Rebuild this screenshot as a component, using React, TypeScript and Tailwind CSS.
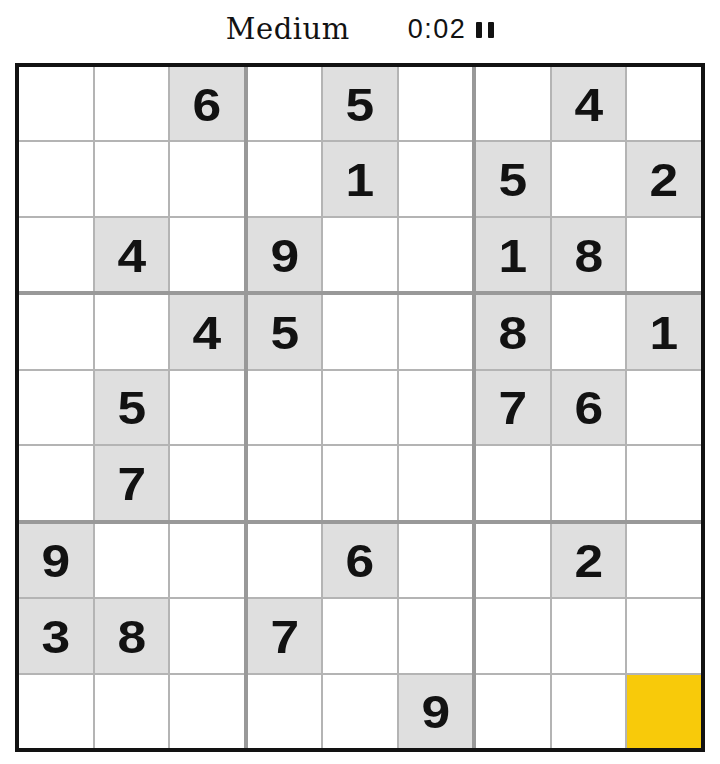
import React from "react";

const rows = [
  "__6_5__4_",
  "____1_5_2",
  "_4_9__18_",
  "__45__8_1",
  "_5____76_",
  "_7_______",
  "9___6__2_",
  "38_7_____",
  "_____9__Y",
];

function Cell({ v }: { v: string }) {
  if (v === "Y") return <div className="bg-[#f8ca0a]" />;
  if (v === "_") return <div className="bg-white" />;
  return (
    <div className="bg-[#dfdfdf] flex items-center justify-center">
      <span
        className="inline-block text-[46px] leading-none font-bold text-[#121212] scale-x-[1.12] translate-y-[1px]"
        style={{ fontFamily: '"Liberation Sans", Arial, sans-serif' }}
      >
        {v}
      </span>
    </div>
  );
}

export default function App() {
  const boxes = [];
  for (let br = 0; br < 3; br++) {
    for (let bc = 0; bc < 3; bc++) {
      const cells = [];
      for (let r = 0; r < 3; r++) {
        for (let c = 0; c < 3; c++) {
          cells.push(<Cell key={`${r}-${c}`} v={rows[br * 3 + r][bc * 3 + c]} />);
        }
      }
      boxes.push(
        <div key={`${br}-${bc}`} className="grid grid-cols-3 grid-rows-3 gap-[2px] bg-[#b4b4b4]">
          {cells}
        </div>
      );
    }
  }
  return (
    <div className="w-[720px] h-[764px] bg-white flex flex-col items-center">
      <div className="h-[63px] w-full flex items-center justify-center pb-[4px]">
        <span
          className="text-[29px] text-[#121212] tracking-[0.5px] mr-[58px]"
          style={{ fontFamily: '"DejaVu Serif", "Liberation Serif", serif', fontWeight: 300 }}
        >
          Medium
        </span>
        <span
          className="text-[27px] text-[#121212] tracking-[1.5px]"
          style={{ fontFamily: '"Liberation Sans", Arial, sans-serif' }}
        >
          0:02
        </span>
        <svg width="18" height="16" viewBox="0 0 18 16" className="ml-[10px]">
          <rect x="0" y="0" width="6" height="16" rx="1" fill="#121212" />
          <rect x="12" y="0" width="6" height="16" rx="1" fill="#121212" />
        </svg>
      </div>
      <div className="w-[690px] h-[689px] border-4 border-[#121212] bg-[#999999] grid grid-cols-3 grid-rows-3 gap-[4px]">
        {boxes}
      </div>
    </div>
  );
}
